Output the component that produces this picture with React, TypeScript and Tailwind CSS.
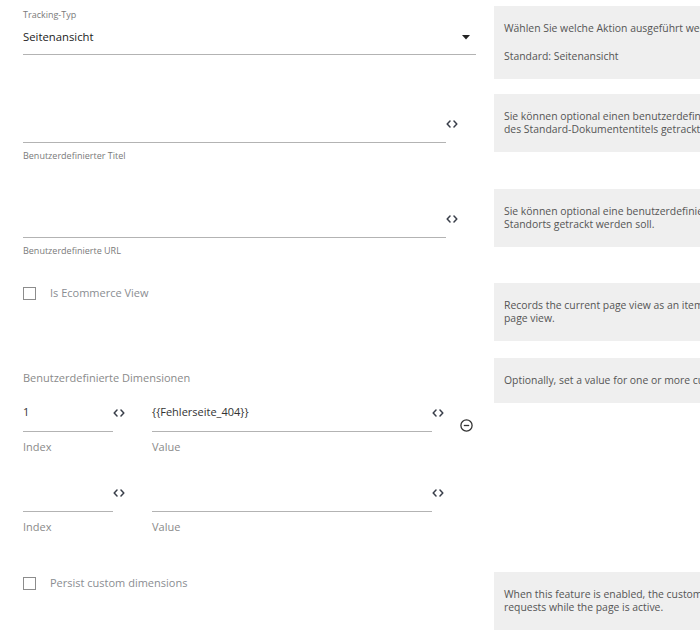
import React from "react";

const font = { fontFamily: '"Open Sans", "Noto Sans", sans-serif' };

function CodeIcon() {
  return (
    <svg width="12" height="8" viewBox="0 0 12 8" fill="none" className="shrink-0">
      <path d="M4 1 L1.2 4 L4 7" stroke="#3a3f4a" strokeWidth="1.5" strokeLinecap="round" strokeLinejoin="round" />
      <path d="M8 1 L10.8 4 L8 7" stroke="#3a3f4a" strokeWidth="1.5" strokeLinecap="round" strokeLinejoin="round" />
    </svg>
  );
}

function Caret() {
  return (
    <svg width="8" height="5" viewBox="0 0 8 5" className="shrink-0">
      <path d="M0 0 H8 L4 4.5 Z" fill="#222" />
    </svg>
  );
}

function MinusCircle() {
  return (
    <svg width="13" height="13" viewBox="0 0 13 13" fill="none">
      <circle cx="6.5" cy="6.5" r="5.6" stroke="#333" strokeWidth="1.3" />
      <path d="M3.8 6.5 H9.2" stroke="#333" strokeWidth="1.3" />
    </svg>
  );
}

function HelpBox({ children }: { children: React.ReactNode }) {
  return (
    <div className="bg-[#efefef] pl-[10px] pr-[8px] pt-[16px] pb-[16px] text-[10.4px] leading-[13px] text-[#555] whitespace-nowrap">
      {children}
    </div>
  );
}

function TextField({ label, top }: { label: string; top: string }) {
  return (
    <div className={top}>
      <div className="flex items-center">
        <div className="w-[423px] h-[38px] border-b border-[#b3b3b3]" />
        <CodeIcon />
      </div>
      <div className="mt-[7px] text-[9px] leading-[12px] text-[#7a7a7a]">{label}</div>
    </div>
  );
}

function Checkbox({ label }: { label: string }) {
  return (
    <div className="flex items-center">
      <div className="w-[13px] h-[13px] border border-[#8c8c8c] bg-white shrink-0" />
      <span className="ml-[14px] text-[11px] leading-[14px] text-[#8a8d92]">{label}</span>
    </div>
  );
}

function DimRow({ index, value }: { index: string; value: string }) {
  return (
    <div className="flex items-start">
      <div className="flex flex-col">
        <div className="flex items-center">
          <div className="w-[90px] h-[38px] border-b border-[#b3b3b3] flex items-center text-[11px] text-[#333]">
            {index}
          </div>
          <CodeIcon />
        </div>
        <div className="mt-[7px] text-[11px] leading-[16px] text-[#8a8a8a]">Index</div>
      </div>
      <div className="flex flex-col ml-[27px]">
        <div className="flex items-center">
          <div className="w-[280px] h-[38px] border-b border-[#b3b3b3] flex items-center text-[11px] text-[#333]">
            {value}
          </div>
          <CodeIcon />
        </div>
        <div className="mt-[7px] text-[11px] leading-[16px] text-[#8a8a8a]">Value</div>
      </div>
      {value ? (
        <div className="ml-[16px] mt-[25px]">
          <MinusCircle />
        </div>
      ) : null}
    </div>
  );
}

export default function App() {
  return (
    <div className="w-[700px] h-[633px] overflow-hidden bg-white" style={font}>
      {/* Row 1 */}
      <div className="flex h-[86px]">
        <div className="w-[494px] shrink-0 pl-[23px]">
          <div className="pt-[9px] text-[9px] leading-[12px] text-[#7a7a7a]">Tracking-Typ</div>
          <div className="w-[453px] h-[34px] border-b border-[#b3b3b3] flex items-center justify-between pr-[6px]">
            <span className="text-[11.3px] text-[#222]">Seitenansicht</span>
            <Caret />
          </div>
        </div>
        <div className="w-[320px] shrink-0 pt-[6px]">
          <HelpBox>
            <div>Wählen Sie welche Aktion ausgeführt werden soll.</div>
            <div className="mt-[15px]">Standard: Seitenansicht</div>
          </HelpBox>
        </div>
      </div>

      {/* Row 2 */}
      <div className="flex h-[95px]">
        <div className="w-[494px] shrink-0 pl-[23px]">
          <TextField label="Benutzerdefinierter Titel" top="pt-[19px]" />
        </div>
        <div className="w-[320px] shrink-0 pt-[8px]">
          <HelpBox>
            <div>Sie können optional einen benutzerdefinierten Titel angeben, der anstelle</div>
            <div>des Standard-Dokumententitels getrackt werden soll.</div>
          </HelpBox>
        </div>
      </div>

      {/* Row 3 */}
      <div className="flex h-[94px]">
        <div className="w-[494px] shrink-0 pl-[23px]">
          <TextField label="Benutzerdefinierte URL" top="pt-[19px]" />
        </div>
        <div className="w-[320px] shrink-0 pt-[8px]">
          <HelpBox>
            <div>Sie können optional eine benutzerdefinierte URL angeben, die anstelle des</div>
            <div>Standorts getrackt werden soll.</div>
          </HelpBox>
        </div>
      </div>

      {/* Row 4 */}
      <div className="flex h-[75px]">
        <div className="w-[494px] shrink-0 pl-[23px] pt-[11px]">
          <Checkbox label="Is Ecommerce View" />
        </div>
        <div className="w-[320px] shrink-0 pt-[8px]">
          <HelpBox>
            <div>Records the current page view as an item view instead of a regular</div>
            <div>page view.</div>
          </HelpBox>
        </div>
      </div>

      {/* Row 5 */}
      <div className="flex h-[214px]">
        <div className="w-[494px] shrink-0 pl-[23px] pt-[20px]">
          <div className="text-[11px] leading-[16px] text-[#8a8a8a]">Benutzerdefinierte Dimensionen</div>
          <div className="mt-[8px] flex flex-col gap-[19px]">
            <DimRow index="1" value="{{Fehlerseite_404}}" />
            <DimRow index="" value="" />
          </div>
        </div>
        <div className="w-[320px] shrink-0 pt-[8px] self-start">
          <HelpBox>
            <div>Optionally, set a value for one or more custom dimensions.</div>
          </HelpBox>
        </div>
      </div>

      {/* Row 6 */}
      <div className="flex">
        <div className="w-[494px] shrink-0 pl-[23px] pt-[12px]">
          <Checkbox label="Persist custom dimensions" />
        </div>
        <div className="w-[320px] shrink-0 pt-[8px]">
          <HelpBox>
            <div>When this feature is enabled, the custom dimensions will be sent with all</div>
            <div>requests while the page is active.</div>
          </HelpBox>
        </div>
      </div>
    </div>
  );
}
